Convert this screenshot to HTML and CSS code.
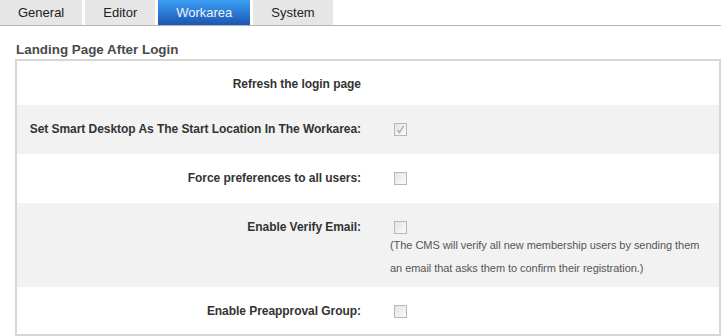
FILE: index.html
```html
<!DOCTYPE html>
<html lang="en">
<head>
  <meta charset="UTF-8">
  <title>Settings - Workarea</title>
  <link rel="stylesheet" href="styles.css">
</head>
<body>
  <ul class="tabs">
    <li class="tab">General</li>
    <li class="tab">Editor</li>
    <li class="tab active">Workarea</li>
    <li class="tab">System</li>
  </ul>

  <div class="section">
    <h2>Landing Page After Login</h2>
    <div class="settings-box">
      <div class="row first">
        <div class="label">Refresh the login page</div>
        <div class="value"></div>
      </div>
      <div class="row alt">
        <div class="label">Set Smart Desktop As The Start Location In The Workarea:</div>
        <div class="value">
          <span class="checkbox checked disabled">
            <svg width="11" height="11" viewBox="0 0 11 11"><path d="M2.5 6 L4.5 8.5 L8.5 2" fill="none" stroke="#a8a8a8" stroke-width="1.3"/></svg>
          </span>
        </div>
      </div>
      <div class="row">
        <div class="label">Force preferences to all users:</div>
        <div class="value"><span class="checkbox"></span></div>
      </div>
      <div class="row alt tall">
        <div class="label">Enable Verify Email:</div>
        <div class="value">
          <span class="checkbox"></span>
          <p class="note">(The CMS will verify all new membership users by sending them an email that asks them to confirm their registration.)</p>
        </div>
      </div>
      <div class="row">
        <div class="label">Enable Preapproval Group:</div>
        <div class="value"><span class="checkbox"></span></div>
      </div>
    </div>
  </div>
</body>
</html>
```

FILE: styles.css
```css
* {
  margin: 0;
  padding: 0;
  box-sizing: border-box;
}
body {
  font-family: 'Liberation Sans', Arial, sans-serif;
  background: #fff;
  color: #333;
}
.tabs {
  display: flex;
  gap: 3px;
  list-style: none;
  height: 26px;
  border-bottom: 1px solid #b4b4b4;
}
.tab {
  height: 25px;
  line-height: 26px;
  padding: 0 18px;
  font-size: 13px;
  color: #222;
  background: #e6e6e6;
}
.tab.active {
  color: #f0f0ff;
  background: linear-gradient(to bottom, #3b9ff4, #1c56b2);
}
.section {
  padding: 16px 0 0 15px;
}
h2 {
  font-size: 13.4px;
  font-weight: bold;
  color: #4a4a4a;
  line-height: 16px;
  margin-bottom: 1px;
  padding-left: 1px;
}
.settings-box {
  border: 2px solid #d6d6d6;
  height: 277px;
}
.row {
  display: grid;
  grid-template-columns: 373px 1fr;
  align-items: start;
  padding: 15px 0;
}
.row.alt {
  background: #f2f2f2;
}
.row.first {
  padding: 14px 0 11px;
}
.row.tall {
  padding-bottom: 7px;
}
.label {
  text-align: right;
  padding-right: 29px;
  font-size: 12px;
  font-weight: bold;
  color: #333;
  line-height: 19px;
  letter-spacing: -0.05px;
}
.value {
  font-size: 11px;
  color: #555;
}
.checkbox {
  display: block;
  width: 13px;
  height: 13px;
  margin: 3px 0 3px 4px;
  border: 1px solid #b8b8b8;
  background: linear-gradient(135deg, #e4e4e4, #fbfbfb);
}
.checkbox svg {
  display: block;
}
.row.tall .checkbox {
  margin-bottom: 0;
}
.note {
  line-height: 23px;
  padding-right: 10px;
  letter-spacing: -0.05px;
}
```
